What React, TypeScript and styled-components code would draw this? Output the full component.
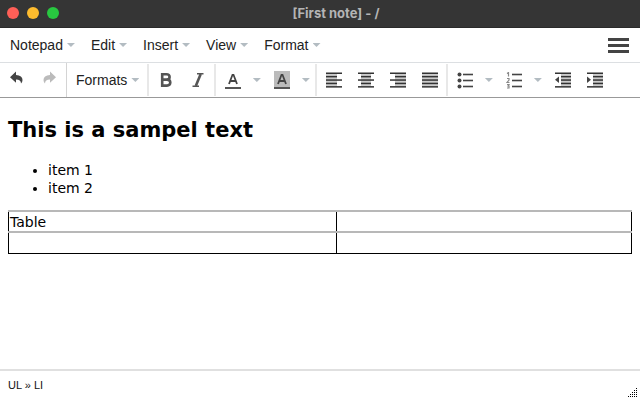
import React from "react";
import styled, { createGlobalStyle } from "styled-components";

const GlobalStyle = createGlobalStyle`
  * { box-sizing: border-box; }
  body { margin: 0; background: #fff; }
  button { font: inherit; color: inherit; background: none; border: 0; padding: 0; cursor: pointer; }
  svg { display: block; }
`;

const Window = styled.div`
  display: flex;
  flex-direction: column;
  min-height: 100vh;
  font-family: "Liberation Sans", Arial, sans-serif;
  font-size: 14px;
  color: #222;
`;

const TitleBar = styled.header`
  display: grid;
  grid-template-columns: 1fr auto 1fr;
  align-items: center;
  height: 28px;
  padding: 0 7px 2px;
  background: #353535;
  border-bottom: 1px solid #2a2a2a;
`;

const Lights = styled.div`
  display: flex;
  gap: 8px;
`;

const Light = styled.button<{ $color: string }>`
  width: 12px;
  height: 12px;
  border-radius: 50%;
  background: ${(p) => p.$color};
`;

const Title = styled.h1`
  margin: 0;
  padding-left: 32px;
  font: 700 13px/16px Inter, "Liberation Sans", sans-serif;
  color: #b4b4b4;
`;

const MenuBar = styled.nav`
  display: flex;
  align-items: center;
  height: 35px;
  padding: 0 11px 0 2px;
  border-bottom: 1px solid #dcdfe2;
`;

const MenuButton = styled.button`
  display: flex;
  align-items: center;
  gap: 4px;
  height: 32px;
  padding: 0 8px;
`;

const Caret = styled.span`
  width: 8px;
  height: 4px;
  background: #b3bcc2;
  clip-path: polygon(0 0, 100% 0, 50% 100%);
`;

const Hamburger = styled.button`
  display: flex;
  flex-direction: column;
  gap: 3px;
  width: 21px;
  margin-left: auto;
`;

const Bar = styled.span`
  height: 3px;
  background: #444;
`;

const Toolbar = styled.div`
  display: flex;
  height: 35px;
  border-bottom: 1px solid #999;
`;

const Group = styled.div<{ $first?: boolean }>`
  display: flex;
  align-items: center;
  margin: ${(p) => (p.$first ? "0" : "1px 0")};
  padding: 0 ${(p) => (p.$first ? "1px" : "0")} 0 1px;
  border-right: ${(p) => (p.$first ? "1px solid #d4d4d4" : "2px solid #e8e8e8")};
  &:last-child { border-right: 0; }
`;

const Tool = styled.button`
  display: flex;
  align-items: center;
  justify-content: center;
  width: 32px;
  height: 32px;
`;

const DropTool = styled(Tool)`
  width: 17px;
  padding-right: 2px;
`;

const Editor = styled.main`
  flex: 1;
  padding: 19px 8px;
  font: 14px/18px Verdana, "DejaVu Sans", sans-serif;
  color: #000;
`;

const Heading = styled.h2`
  margin: 0 0 17px;
  font-size: 21px;
  line-height: 27px;
`;

const List = styled.ul`
  margin: 0 0 13px;
  padding-left: 40px;
`;

const Table = styled.table`
  width: 100%;
  border-collapse: collapse;
  table-layout: fixed;
`;

const Cell = styled.td<{ $width?: string }>`
  width: ${(p) => p.$width ?? "auto"};
  height: 21px;
  padding: 0 1px;
  border: 1px solid #000;
  border-top: 2px solid #b8b8b8;
`;

const StatusBar = styled.footer`
  display: flex;
  justify-content: space-between;
  height: 31px;
  padding: 0 3px 0 8px;
  border-top: 2px solid #e0e0e0;
  font-size: 11px;
  line-height: 28px;
  color: #111;
`;

const Grip = styled.svg`
  align-self: flex-end;
  margin-bottom: 3px;
`;

const ink = "#444";

const Reply = ({ flip = false, color = ink }: { flip?: boolean; color?: string }) => (
  <svg width="16" height="18" viewBox="0 0 16 18" aria-hidden="true">
    <g transform={flip ? "translate(16 0) scale(-1 1)" : undefined}>
      <path fill={color} d="M7 .5V4Q13.500 4.500 13.500 9Q13.500 11 12 12.500Q12 8.700 7 8.500V11.800L1 6.200Z" />
    </g>
  </svg>
);

const Bold = () => (
  <svg width="14" height="16" viewBox="0 0 14 16" aria-hidden="true">
    <path fill="none" stroke="#555" strokeWidth="2.600" d="M3.200 2.300H7.500Q10.600 2.300 10.600 4.900Q10.600 7.600 7.500 7.600H3.200H8Q11.300 7.600 11.300 10.600Q11.300 13.600 8 13.600H3.200Z" />
  </svg>
);

const Italic = () => (
  <svg width="14" height="16" viewBox="0 0 14 16" aria-hidden="true">
    <path fill="none" stroke="#555" strokeWidth="1.500" d="M6 1.800H12.500M1.500 14.200H8" />
    <path fill="none" stroke="#555" strokeWidth="2.600" d="M9.700 2L4.800 14" />
  </svg>
);

const ColorA = ({ filled = false }: { filled?: boolean }) => (
  <svg width="16" height="18" viewBox="0 0 16 18" aria-hidden="true">
    {filled && <path fill="#bbb" d="M0 0H16V17H0Z" />}
    <path fill="none" stroke={ink} strokeWidth="1.800" d="M4 13L7.500 3.800H8.500L12 13M5.500 10H10.500" />
    <path fill="#555" d="M0 16H16V18H0Z" />
  </svg>
);

type Span = [number, number];

const Lines = ({ spans, children }: { spans: Span[]; children?: React.ReactNode }) => (
  <svg width="17" height="16" viewBox="0 0 17 16" aria-hidden="true">
    {spans.slice(0, -1).map(([x, w], i) => {
      const next = spans[i + 1];
      const left = Math.max(x, next[0]);
      const right = Math.min(x + w, next[0] + next[1]);
      return <rect key={i} x={left} y={1 + i * 3.4} width={right - left} height="3.400" fill="#ccc" />;
    })}
    {spans.map(([x, w], i) => (
      <rect key={i} x={x} y={0.5 + i * 3.4} width={w} height="1.500" fill="#333" />
    ))}
    {children}
  </svg>
);

const aligns: { name: string; spans: Span[] }[] = [
  { name: "Align left", spans: [[0, 16], [0, 11], [0, 16], [0, 11], [0, 16]] },
  { name: "Align center", spans: [[0, 16], [3, 10], [0, 16], [3, 10], [0, 16]] },
  { name: "Align right", spans: [[0, 16], [5, 11], [0, 16], [5, 11], [0, 16]] },
  { name: "Justify", spans: [[0, 16], [0, 16], [0, 16], [0, 16], [0, 16]] },
];

const indentSpans: Span[] = [[0, 16], [6, 10], [6, 10], [6, 10], [0, 16]];

const Bullets = () => (
  <svg width="17" height="17" viewBox="0 0 17 17" aria-hidden="true">
    {[2.5, 8.5, 14.5].map((y) => (
      <g key={y} fill={ink}>
        <circle cx="2.500" cy={y} r="2" />
        <rect x="6" y={y - 0.8} width="10" height="1.600" />
      </g>
    ))}
  </svg>
);

const Numbers = () => (
  <svg width="17" height="17" viewBox="0 0 17 17" aria-hidden="true">
    <path fill="none" stroke="#888" strokeWidth="1.200" d="M1 1.500L2.500 .5V4.500M1 6.500H3V8L1 10.500H3.500M1 12.500H3L2 14H3V16H1" />
    {[2.5, 8.5, 14.5].map((y) => (
      <rect key={y} x="6" y={y - 0.8} width="10" height="1.600" fill={ink} />
    ))}
  </svg>
);

const menus = ["Notepad", "Edit", "Insert", "View", "Format"];

const gripDots = [[4, 0], [3, 1], [4, 1], [2, 2], [3, 2], [4, 2], [1, 3], [2, 3], [3, 3], [4, 3], [0, 4], [1, 4], [2, 4], [3, 4], [4, 4]];

const Drop = ({ label }: { label: string }) => (
  <DropTool aria-label={label}><Caret /></DropTool>
);

export default function App() {
  return (
    <Window>
      <GlobalStyle />
      <TitleBar>
        <Lights>
          <Light $color="#ff5f57" aria-label="Close" />
          <Light $color="#febc2e" aria-label="Minimize" />
          <Light $color="#28c840" aria-label="Zoom" />
        </Lights>
        <Title>[First note] - /</Title>
      </TitleBar>
      <MenuBar>
        {menus.map((m) => (
          <MenuButton key={m}>{m}<Caret /></MenuButton>
        ))}
        <Hamburger aria-label="Menu"><Bar /><Bar /><Bar /></Hamburger>
      </MenuBar>
      <Toolbar role="toolbar" aria-label="Formatting">
        <Group $first>
          <Tool aria-label="Undo"><Reply /></Tool>
          <Tool aria-label="Redo"><Reply flip color="#bbb" /></Tool>
        </Group>
        <Group>
          <MenuButton>Formats<Caret /></MenuButton>
        </Group>
        <Group>
          <Tool aria-label="Bold"><Bold /></Tool>
          <Tool aria-label="Italic"><Italic /></Tool>
        </Group>
        <Group>
          <Tool aria-label="Text color"><ColorA /></Tool>
          <Drop label="Text color options" />
          <Tool aria-label="Background color"><ColorA filled /></Tool>
          <Drop label="Background color options" />
        </Group>
        <Group>
          {aligns.map((a) => (
            <Tool key={a.name} aria-label={a.name}><Lines spans={a.spans} /></Tool>
          ))}
        </Group>
        <Group>
          <Tool aria-label="Bullet list"><Bullets /></Tool>
          <Drop label="Bullet list options" />
          <Tool aria-label="Numbered list"><Numbers /></Tool>
          <Drop label="Numbered list options" />
          <Tool aria-label="Decrease indent">
            <Lines spans={indentSpans}><path fill={ink} d="M4 4.500V11L0 7.800Z" /></Lines>
          </Tool>
          <Tool aria-label="Increase indent">
            <Lines spans={indentSpans}><path fill={ink} d="M0 4.500V11L4 7.800Z" /></Lines>
          </Tool>
        </Group>
      </Toolbar>
      <Editor>
        <Heading>This is a sampel text</Heading>
        <List>
          <li>item 1</li>
          <li>item 2</li>
        </List>
        <Table>
          <tbody>
            <tr><Cell $width="52.6%">Table</Cell><Cell /></tr>
            <tr><Cell /><Cell /></tr>
          </tbody>
        </Table>
      </Editor>
      <StatusBar>
        <span>UL » LI</span>
        <Grip width="9" height="9" viewBox="0 0 9 9" aria-hidden="true">
          {gripDots.map(([x, y]) => (
            <rect key={`${x}-${y}`} x={x * 2} y={y * 2} width="1" height="1" fill="#000" />
          ))}
        </Grip>
      </StatusBar>
    </Window>
  );
}
